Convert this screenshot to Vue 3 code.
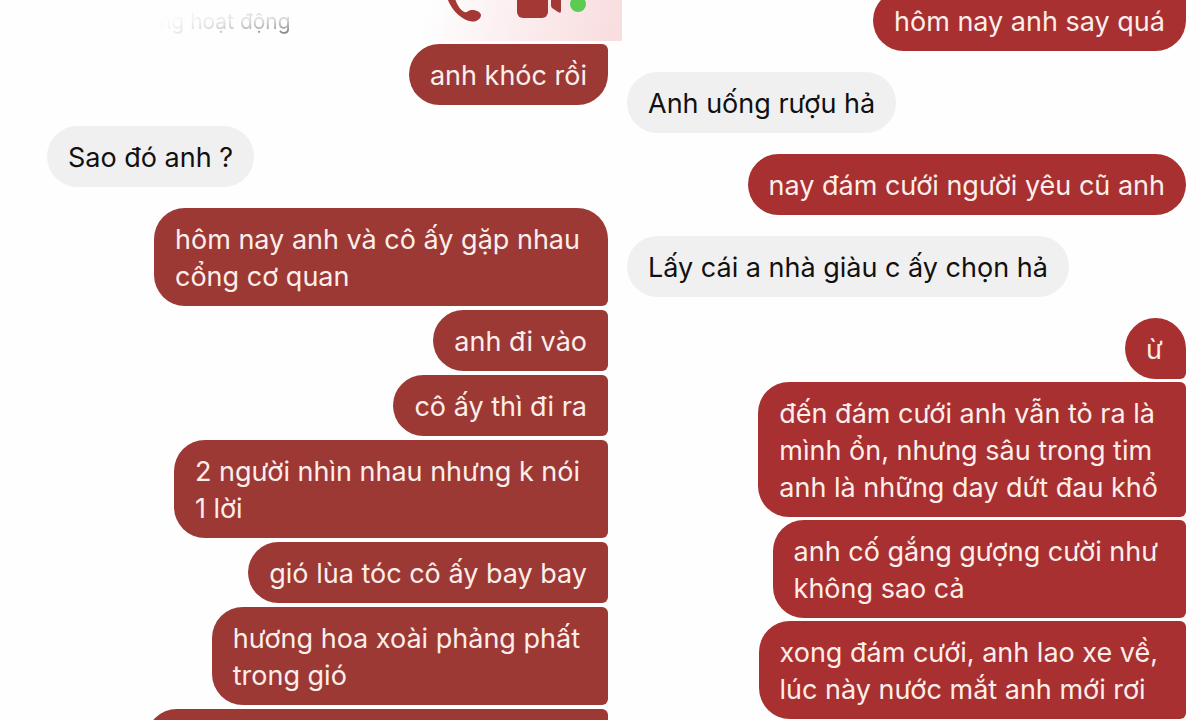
<script setup>
const left = [
  { lines: ['anh khóc rồi'], from: 'me', pos: 'last' },
  { lines: ['Sao đó anh ?'], from: 'them', pos: 'single' },
  { lines: ['hôm nay anh và cô ấy gặp nhau', 'cổng cơ quan'], from: 'me', pos: 'first' },
  { lines: ['anh đi vào'], from: 'me', pos: 'middle' },
  { lines: ['cô ấy thì đi ra'], from: 'me', pos: 'middle' },
  { lines: ['2 người nhìn nhau nhưng k nói', '1 lời'], from: 'me', pos: 'middle' },
  { lines: ['gió lùa tóc cô ấy bay bay'], from: 'me', pos: 'middle' },
  { lines: ['hương hoa xoài phảng phất', 'trong gió'], from: 'me', pos: 'middle' },
  { lines: [], from: 'me', pos: 'middle' },
]
const right = [
  { lines: ['hôm nay anh say quá'], from: 'me', pos: 'last' },
  { lines: ['Anh uống rượu hả'], from: 'them', pos: 'single' },
  { lines: ['nay đám cưới người yêu cũ anh'], from: 'me', pos: 'single' },
  { lines: ['Lấy cái a nhà giàu c ấy chọn hả'], from: 'them', pos: 'single' },
  { lines: ['ừ'], from: 'me', pos: 'first' },
  { lines: ['đến đám cưới anh vẫn tỏ ra là', 'mình ổn, nhưng sâu trong tim', 'anh là những day dứt đau khổ'], from: 'me', pos: 'middle' },
  { lines: ['anh cố gắng gượng cười như', 'không sao cả'], from: 'me', pos: 'middle' },
  { lines: ['xong đám cưới, anh lao xe về,', 'lúc này nước mắt anh mới rơi'], from: 'me', pos: 'middle' },
]
const classes = (m) => ['bubble', m.from, m.pos, { multi: m.lines.length > 1, blank: !m.lines.length }]
</script>

<template>
  <main class="screen">
    <section class="chat chat-left">
      <header class="bar">
        <p class="status">Đang hoạt động</p>
        <div class="actions">
          <button class="action" aria-label="Gọi thoại">
            <svg width="36" height="41" viewBox="0 0 36 41">
              <path d="M-2 -6 C1 7 12 20 24 21.500 C29 22 33 18.500 33 15 C33 11.500 26 9.500 23 10 C20 10.500 19 13 16.500 12 C12 10 8.500 4 6.500 -3 Z" fill="#a33834" />
            </svg>
          </button>
          <button class="action" aria-label="Gọi video">
            <svg width="70" height="41" viewBox="0 0 70 41">
              <rect x="0" y="-14" width="31" height="32" rx="6" fill="#a33834" />
              <path d="M34 -6 L44 -10 V11 Q44 14 41 12 L35 8 Q34 7 34 5 Z" fill="#a33834" />
              <circle cx="61" cy="4" r="8" fill="#5ccb52" />
            </svg>
          </button>
        </div>
      </header>
      <ul class="list">
        <li v-for="(m, i) in left" :key="i" :class="classes(m)">
          <span v-for="l in m.lines" :key="l" class="line">{{ l }}</span>
        </li>
      </ul>
    </section>
    <section class="chat chat-right">
      <ul class="list">
        <li v-for="(m, i) in right" :key="i" :class="classes(m)">
          <span v-for="l in m.lines" :key="l" class="line">{{ l }}</span>
        </li>
      </ul>
    </section>
  </main>
</template>

<style>
body {
  margin: 0;
  background: #fefefe;
}
</style>

<style scoped>
.screen {
  display: grid;
  grid-template-columns: 622fr 578fr;
  height: 100vh;
  overflow: hidden;
  background: #fefefe;
  font-family: Inter, "Liberation Sans", sans-serif;
  font-size: 27px;
  line-height: 37px;
}
.chat {
  min-width: 0;
}
.chat-left {
  --mine: #9c3935;
  --gap: 4px;
}
.chat-right {
  --mine: #a83031;
  --gap: 3px;
}
.bar {
  display: flex;
  justify-content: space-between;
  height: 41px;
  overflow: hidden;
  background: linear-gradient(105deg, #fefefe 68%, #fbeced 84%, #f9dcde);
}
.status {
  margin: 8px 0 0 132px;
  font-size: 21px;
  line-height: 27px;
  color: #777;
  mask-image:
    linear-gradient(90deg, transparent 14%, rgb(0 0 0 / 50%) 60%, #000),
    linear-gradient(180deg, rgb(0 0 0 / 30%) 35%, #000 80%);
  mask-composite: intersect;
}
.actions {
  display: flex;
  gap: 33px;
  padding-right: 35px;
}
.action {
  display: block;
  padding: 0;
  border: 0;
  background: none;
}
.action svg {
  display: block;
}
.list {
  display: flex;
  flex-direction: column;
  align-items: flex-end;
  gap: var(--gap);
  margin: 0;
  padding: 3px 14px 0 47px;
  list-style: none;
}
.chat-right .list {
  margin-top: -10px;
  padding: 0 14px 0 5px;
}
.bubble {
  box-sizing: border-box;
  min-width: 61px;
  padding: 13px 21px 11px;
  border-radius: 31px;
  white-space: nowrap;
}
.line {
  display: block;
}
.me {
  background: var(--mine);
  color: #fdeeea;
}
.them {
  align-self: flex-start;
  margin: calc(21px - var(--gap)) 0;
  background: #f0f0f0;
  color: #111;
}
.first {
  border-bottom-right-radius: 6px;
}
.middle {
  border-top-right-radius: 6px;
  border-bottom-right-radius: 6px;
}
.last {
  border-top-right-radius: 6px;
}
.multi {
  padding-right: 28px;
}
.blank {
  width: 462px;
  height: 98px;
}
</style>
